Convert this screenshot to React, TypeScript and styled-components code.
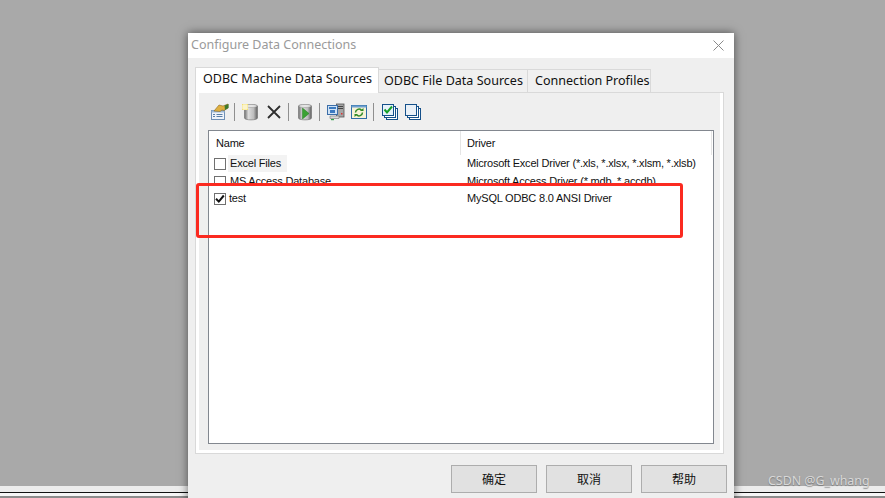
import React from "react";
import styled, { createGlobalStyle } from "styled-components";

const Global = createGlobalStyle`
  html, body { margin: 0; padding: 0; width: 885px; height: 498px; overflow: hidden; background: #a9a9a9; }
  #root { width: 885px; height: 498px; }
`;

const Desktop = styled.div`
  position: relative; width: 885px; height: 498px; overflow: hidden;
  display: flex; flex-direction: column; justify-content: flex-end; background: #a9a9a9;
`;
const Taskbar = styled.div`
  height: 12px; flex: none; box-sizing: border-box;
  background: linear-gradient(#ececec 0 5.5px, #111 5.5px 7px, #f6f6f6 7px 10px, #8c8c8c 10px);
`;
const Dialog = styled.div`
  position: absolute; left: 188px; top: 33px; width: 546px; height: 480px;
  background: #efefef; box-shadow: 0 0 9px rgba(0,0,0,.55);
  display: flex; flex-direction: column;
`;
const TitleBar = styled.div`
  height: 25px; flex: none; background: #fff; display: flex; align-items: center; justify-content: space-between;
  padding: 0 10px 0 3px;
`;
const Title = styled.span`
  font: 12.5px/23px "Noto Sans", sans-serif; color: #9a9a9a; height: 25px;
`;
const Body = styled.div`
  padding: 9px 10px 0 7px; display: flex; flex-direction: column;
`;
const Tabs = styled.div`
  display: flex; align-items: flex-end; height: 26px; margin-bottom: -1px; position: relative; z-index: 1;
`;
const Tab = styled.div<{ $active?: boolean; $w: number; $pad: number }>`
  box-sizing: border-box; width: ${p => p.$w}px;
  height: ${p => (p.$active ? 26 : 23)}px;
  margin-bottom: ${p => (p.$active ? 0 : 1)}px;
  border: 1px solid #d9d9d9; border-left-width: ${p => (p.$active ? 1 : 0)}px;
  border-bottom-width: 0;
  background: ${p => (p.$active ? "#fff" : "#f0f0f0")};
  font: 12.55px/22px "Noto Sans", sans-serif; color: #111;
  padding-left: ${p => p.$pad}px; white-space: nowrap;
`;
const Panel = styled.div`
  box-sizing: border-box; width: 529px; height: 362px;
  border: 1px solid #d9d9d9; background: #efefef;
  box-shadow: inset 3px 0 0 #fff, inset -3px 0 0 #fff, inset 0 -3px 0 #fff;
  padding: 0 9px 0 12px; display: flex; flex-direction: column;
`;
const Toolbar = styled.div`
  display: flex; align-items: center; height: 37px; flex: none;
`;
const ToolButton = styled.div`
  width: 23px; height: 20px; display: flex; align-items: center; justify-content: center; flex: none;
`;
const ToolSep = styled.div`
  width: 1px; height: 18px; background: #8f8f8f; margin: 0 4px 0 3px; flex: none;
`;
const List = styled.div`
  box-sizing: border-box; width: 506px; height: 314px; flex: none; background: #fff;
  border: 1px solid #82878f; overflow: hidden;
  font: 11px/17px "Liberation Sans", Arial, sans-serif; letter-spacing: -.2px; color: #111;
`;
const ListHeader = styled.div`
  display: grid; grid-template-columns: 252px 251px; height: 24px;
`;
const HeaderCell = styled.div<{ $pad: number }>`
  box-sizing: border-box; padding-left: ${p => p.$pad}px; border-right: 1px solid #e5e5e5; line-height: 24px;
`;
const Row = styled.div<{ $h: number; $top?: number }>`
  display: grid; grid-template-columns: 252px 1fr; height: ${p => p.$h}px; overflow: hidden;
  padding-top: ${p => p.$top ?? 0}px; box-sizing: border-box; line-height: 16px;
`;
const NameCell = styled.div`
  display: flex; align-items: flex-start; padding-left: 5px;
`;
const DriverCell = styled.div`
  padding-left: 6px; white-space: nowrap;
`;
const Check = styled.span`
  box-sizing: border-box; width: 12px; height: 12px; border: 1px solid #707070; background: #fff; flex: none;
  margin-top: 3px; display: flex; align-items: center; justify-content: center;
`;
const NameLabel = styled.span<{ $hot?: boolean; $ml: number }>`
  margin-left: ${p => (p.$hot ? p.$ml - 2 : p.$ml)}px;
  padding: 0 ${p => (p.$hot ? 6 : 0)}px 1px ${p => (p.$hot ? 2 : 0)}px;
  background: ${p => (p.$hot ? "#f3f3f3" : "transparent")};
  white-space: nowrap;
`;
const Footer = styled.div`
  display: flex; justify-content: flex-end; gap: 9px; margin-top: 11px; margin-right: -3px;
`;
const DialogButton = styled.div`
  box-sizing: border-box; width: 86px; height: 28px; background: #e1e1e1; border: 1px solid #adadad;
  display: flex; align-items: center; justify-content: center;
  font: 12px/26px "Noto Sans CJK SC", "Noto Sans", sans-serif; color: #111;
`;
const Highlight = styled.div`
  position: absolute; left: 196px; top: 183px; width: 487px; height: 55px; box-sizing: border-box;
  border: 3px solid #fb2a20; border-radius: 3px; pointer-events: none;
`;
const Watermark = styled.div`
  position: absolute; left: 768px; top: 472px; font: 12.4px/17px "Noto Sans", sans-serif; color: #d8d8d8;
  text-shadow: 0 1px 1px rgba(90,90,90,.6); white-space: nowrap;
`;

const CloseIcon = () => (
  <svg width="11" height="11" viewBox="0 0 11 11"><path d="M.5.5l10 10M10.500.5l-10 10" stroke="#8a8a8a" strokeWidth="1" fill="none" /></svg>
);

const Icon = ({ children }: { children: React.ReactNode }) => (
  <svg width="18" height="18" viewBox="0 0 18 18">{children}</svg>
);
const cyl = (
  <>
    <defs>
      <linearGradient id="cy" x1="0" x2="1" y1="0" y2="0">
        <stop offset="0" stopColor="#6e6e6e" /><stop offset=".3" stopColor="#dcdcdc" /><stop offset=".7" stopColor="#bdbdbd" /><stop offset="1" stopColor="#5e5e5e" />
      </linearGradient>
    </defs>
    <path d="M2.500 3C2.500 1 15.500 1 15.500 3V15c0 2.500-13 2.500-13 0z" fill="url(#cy)" stroke="#6e6e6e" strokeWidth=".6" />
    <ellipse cx="9" cy="3" rx="6" ry="1.500" fill="#e6e6e6" stroke="#999" strokeWidth=".5" />
  </>
);
const Check2 = (
  <svg width="10" height="10" viewBox="0 0 10 10"><path d="M1 4.800L3.800 7.600 8.800 1.500" stroke="#111" strokeWidth="2" fill="none" /></svg>
);

export default function App() {
  return (
    <Desktop>
      <Global />
      <Taskbar />
      <Dialog>
        <TitleBar>
          <Title>Configure Data Connections</Title>
          <CloseIcon />
        </TitleBar>
        <Body>
          <Tabs>
            <Tab $active $w={184} $pad={7}>ODBC Machine Data Sources</Tab>
            <Tab $w={149} $pad={5}>ODBC File Data Sources</Tab>
            <Tab $w={123} $pad={7}>Connection Profiles</Tab>
          </Tabs>
          <Panel>
            <Toolbar>
              <ToolButton>
                <Icon>
                  <rect x=".5" y="7.500" width="13" height="9" fill="#eef3fa" stroke="#6f8fb5" />
                  <rect x=".5" y="7.500" width="13" height="2" fill="#9db9d8" />
                  <path d="M2 11.500h2M2 13.500h2M5.500 11.500h6M5.500 13.500h6" stroke="#5a7fa8" />
                  <path d="M3 8l5-6 4 1 5-2v4l-4 2.500-2-.5-2 1.500z" fill="#e0b040" stroke="#8a6a20" strokeWidth=".6" />
                  <path d="M13.500 2.500L17.500 1v4l-3.500 2z" fill="#3f7a2c" />
                </Icon>
              </ToolButton>
              <ToolSep />
              <ToolButton>
                <Icon>
                  {cyl}
                  <path d="M0 1h6v6H0z" fill="#f3df70" />
                  <path d="M0 3h6M0 5h6M2 1v6M4 1v6" stroke="#fff" strokeWidth=".8" />
                </Icon>
              </ToolButton>
              <ToolButton>
                <Icon><path d="M3 3l12 12M15 3L3 15" stroke="#2e2e2e" strokeWidth="1.800" fill="none" /></Icon>
              </ToolButton>
              <ToolSep />
              <ToolButton>
                <Icon>
                  {cyl}
                  <path d="M6.500 5L13 10.500l-6.500 5.500z" fill="#3aa232" stroke="#1f7a1c" strokeWidth=".5" />
                </Icon>
              </ToolButton>
              <ToolSep />
              <ToolButton>
                <Icon>
                  <rect x="9.500" y="1" width="7.500" height="13" fill="#a5a5a5" stroke="#555" strokeWidth=".8" />
                  <path d="M10.500 3.500h5.500M10.500 5.500h5.500" stroke="#444" />
                  <rect x="14" y="10" width="1.500" height="1.500" fill="#d33" />
                  <rect x=".5" y="2.500" width="10" height="9" fill="#cfe2f5" stroke="#3c6ea8" />
                  <rect x="2" y="4" width="7" height="2" fill="#3c7ac0" />
                  <rect x="3" y="7" width="5" height="3" fill="#3c7ac0" />
                  <path d="M3 13h9v2.500H3z" fill="#d9d9d9" stroke="#777" strokeWidth=".6" />
                  <rect x="4" y="16" width="3" height="1.200" fill="#2fa34a" />
                </Icon>
              </ToolButton>
              <ToolButton>
                <Icon>
                  <rect x="1.500" y="2.500" width="15" height="13" fill="#f7f3d8" stroke="#2f6ea6" />
                  <rect x="1.500" y="2.500" width="15" height="2" fill="#6f9fd0" />
                  <path d="M5.500 9.500a3.500 3.500 0 0 1 6-2.300M12.500 9.500a3.500 3.500 0 0 1-6 2.300" stroke="#2f8a24" strokeWidth="1.500" fill="none" />
                  <path d="M10 8h3.500V5zM8 11H4.500v3z" fill="#2f8a24" />
                </Icon>
              </ToolButton>
              <ToolSep />
              <ToolButton>
                <Icon>
                  <rect x="5.500" y="5.500" width="11" height="11" fill="#fff" stroke="#14508a" />
                  <rect x="3.500" y="3.500" width="11" height="11" fill="#fff" stroke="#14508a" />
                  <rect x="1.500" y="1.500" width="11" height="11" fill="#e6f1fa" stroke="#14508a" />
                  <path d="M3.500 6.500L6 9.500 11 3.500" stroke="#17a02a" strokeWidth="2" fill="none" />
                </Icon>
              </ToolButton>
              <ToolButton>
                <Icon>
                  <rect x="5.500" y="5.500" width="11" height="11" fill="#fff" stroke="#14508a" />
                  <rect x="3.500" y="3.500" width="11" height="11" fill="#fff" stroke="#14508a" />
                  <rect x="1.500" y="1.500" width="11" height="11" fill="#e9f0f7" stroke="#14508a" />
                </Icon>
              </ToolButton>
            </Toolbar>
            <List>
              <ListHeader>
                <HeaderCell $pad={7}>Name</HeaderCell>
                <HeaderCell $pad={6}>Driver</HeaderCell>
              </ListHeader>
              <Row $h={17.5}>
                <NameCell><Check /><NameLabel $hot $ml={4}>Excel Files</NameLabel></NameCell>
                <DriverCell>Microsoft Excel Driver (*.xls, *.xlsx, *.xlsm, *.xlsb)</DriverCell>
              </Row>
              <Row $h={12.5}>
                <NameCell><Check /><NameLabel $ml={4}>MS Access Database</NameLabel></NameCell>
                <DriverCell>Microsoft Access Driver (*.mdb, *.accdb)</DriverCell>
              </Row>
              <Row $h={23} $top={5}>
                <NameCell><Check>{Check2}</Check><NameLabel $ml={3}>test</NameLabel></NameCell>
                <DriverCell>MySQL ODBC 8.0 ANSI Driver</DriverCell>
              </Row>
            </List>
          </Panel>
          <Footer>
            <DialogButton>确定</DialogButton>
            <DialogButton>取消</DialogButton>
            <DialogButton>帮助</DialogButton>
          </Footer>
        </Body>
      </Dialog>
      <Highlight />
      <Watermark>CSDN @G_whang</Watermark>
    </Desktop>
  );
}
